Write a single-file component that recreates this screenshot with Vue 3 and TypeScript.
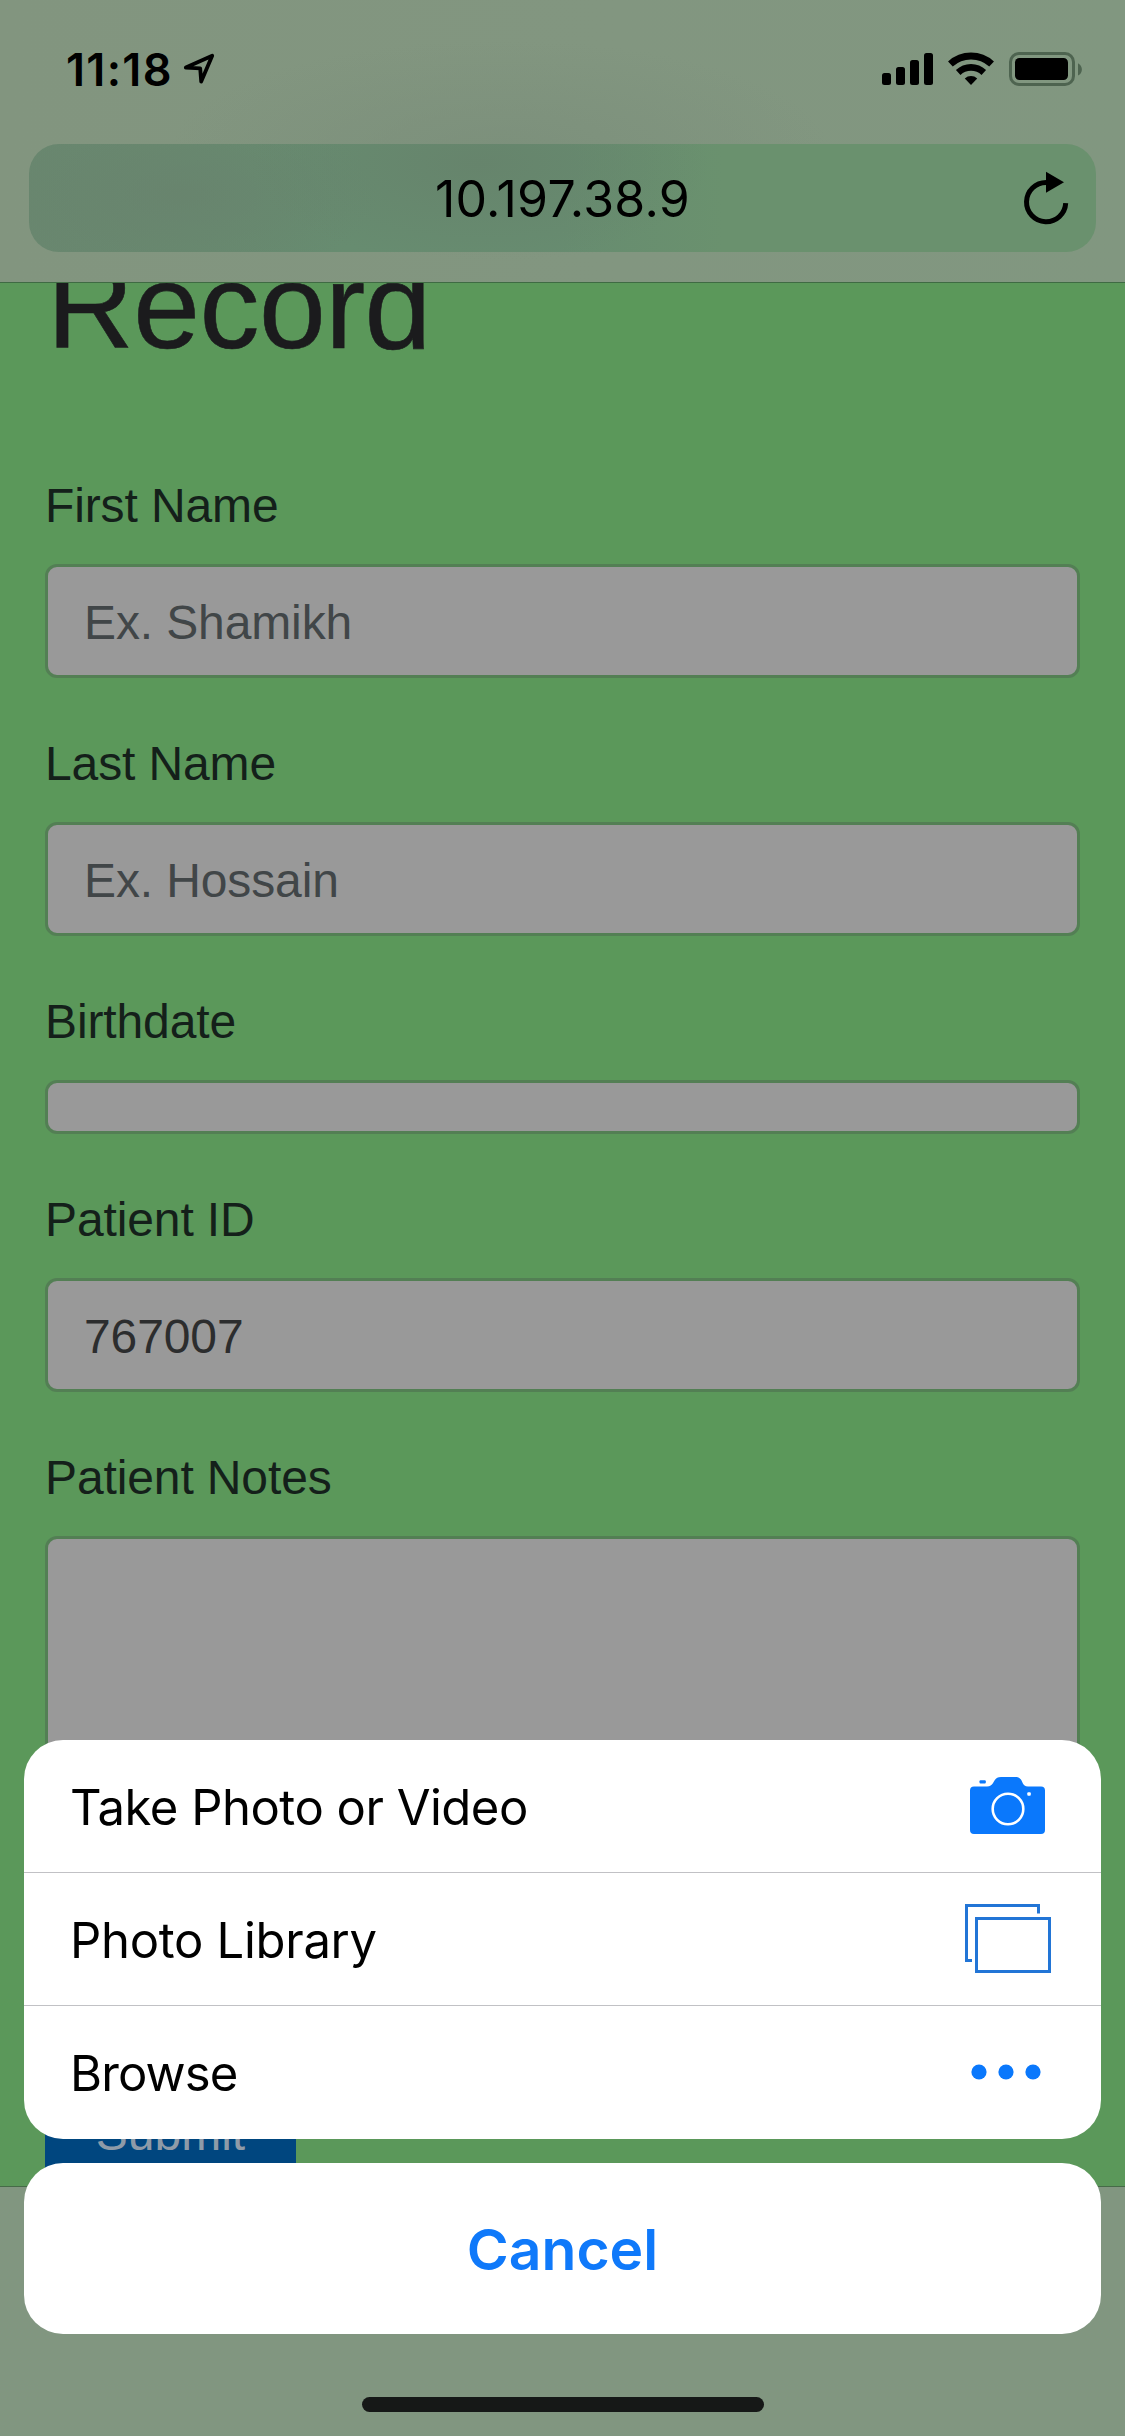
<script setup lang="ts">
interface Field {
  label: string
  value?: string
  placeholder?: string
  kind?: 'short' | 'area'
}

const fields: Field[] = [
  { label: 'First Name', placeholder: 'Ex. Shamikh' },
  { label: 'Last Name', placeholder: 'Ex. Hossain' },
  { label: 'Birthdate', kind: 'short' },
  { label: 'Patient ID', value: '767007' },
  { label: 'Patient Notes', kind: 'area' },
]
</script>

<template>
  <div class="screen">
    <header class="topbar">
      <div class="status">
        <span class="time">11:18</span>
        <svg class="loc" width="32" height="32" viewBox="0 0 32 32">
          <path d="M2.8 14.6 29.2 2.8 18.2 28.6 17.2 15.4Z" fill="none" stroke="#000" stroke-width="3.8" stroke-linejoin="round" />
        </svg>
        <svg class="signals" width="202" height="36" viewBox="0 0 202 36">
          <rect x="0" y="22" width="9" height="12" rx="2.5" />
          <rect x="14" y="16" width="9" height="18" rx="2.5" />
          <rect x="28" y="9" width="9" height="25" rx="2.5" />
          <rect x="42" y="2" width="9" height="32" rx="2.5" />
          <path d="M68.400 13a30.500 30.500 0 0 1 41.200 0" fill="none" stroke="#000" stroke-width="7" />
          <path d="M76.200 21.500a18.600 18.600 0 0 1 25.600 0" fill="none" stroke="#000" stroke-width="6.600" />
          <path d="M89 34 82.800 27.400a9.400 9.400 0 0 1 12.400 0Z" />
          <rect x="128.5" y="2.5" width="63" height="31" rx="8.5" fill="none" stroke="#4e6450" stroke-width="3" />
          <rect x="133" y="7" width="53" height="22" rx="4.5" />
          <path d="M196 12.2c5.2 2.6 5.2 10 0 12.4Z" fill="#4e6450" />
        </svg>
      </div>
      <div class="address">
        <span class="url">10.197.38.9</span>
        <svg class="reload" width="48" height="56" viewBox="0 0 48 56">
          <path d="M24.3 12.5a19.6 19.6 0 1 0 19.4 20.6" fill="none" stroke="#000" stroke-width="5" />
          <path d="M24 1.7 42 12.3 24 22.7Z" />
        </svg>
      </div>
    </header>

    <main class="page">
      <h1>Record</h1>
      <div v-for="f in fields" :key="f.label" class="group">
        <label>{{ f.label }}</label>
        <div class="control" :class="f.kind">
          <span v-if="f.value">{{ f.value }}</span>
          <span v-else-if="f.placeholder" class="placeholder">{{ f.placeholder }}</span>
        </div>
      </div>
      <button class="submit">Submit</button>
    </main>

    <footer class="toolbar"></footer>

    <div class="overlay">
      <div class="sheet">
        <div class="row">
          <span class="take">Take Photo or Video</span>
          <svg width="75" height="58" viewBox="0 0 75 58" fill="#0a78fc">
            <path d="M4 9.500H17C25 9.500 22.500 0 31 0H45.500C54 0 50.500 9.500 58 9.500H71a4 4 0 0 1 4 4V53a4 4 0 0 1-4 4H4a4 4 0 0 1-4-4V13.500a4 4 0 0 1 4-4Z" />
            <rect x="9.500" y="3.300" width="6.300" height="3.200" rx="1" />
            <circle cx="38" cy="32" r="15.300" fill="none" stroke="#fff" stroke-width="2.600" />
            <rect x="57.300" y="15.300" width="3.500" height="3.500" rx="1" fill="#fff" />
          </svg>
        </div>
        <div class="row">
          <span class="library">Photo Library</span>
          <svg class="photos" width="86" height="69" viewBox="0 0 86 69" fill="none" stroke="#2275d6" stroke-width="3">
            <path d="M7 56.500H1.500V1.500H73.500V9.500" />
            <rect x="11.500" y="14.500" width="73" height="53" />
          </svg>
        </div>
        <div class="row">
          <span class="browse">Browse</span>
          <svg class="dots" width="70" height="16" viewBox="0 0 70 16" fill="#0a78fc">
            <circle cx="8" cy="8" r="7.600" />
            <circle cx="35" cy="8" r="7.600" />
            <circle cx="62" cy="8" r="7.600" />
          </svg>
        </div>
      </div>
      <div class="cancel"><span>Cancel</span></div>
      <div class="home"></div>
    </div>
  </div>
</template>

<style>
body {
  margin: 0;
}
</style>

<style scoped>
.screen {
  position: relative;
  box-sizing: border-box;
  width: 1125px;
  height: 2436px;
  overflow: hidden;
  display: flex;
  flex-direction: column;
  background: #5b985a;
  font-family: "Liberation Sans", Arial, sans-serif;
}
.topbar {
  flex: none;
  box-sizing: border-box;
  height: 283px;
  border-bottom: 1px solid #3f6b43;
  background:
    radial-gradient(ellipse 330px 110px at 500px 150px, rgba(122, 142, 122, 0.75), rgba(122, 142, 122, 0) 100%),
    linear-gradient(90deg, #82957f, #829680 55%, #819780);
  font-family: Inter, "Noto Sans", sans-serif;
  color: #000;
}
.status {
  display: flex;
  height: 144px;
  align-items: flex-start;
}
.time {
  width: 117px;
  margin: 43px 0 0 66px;
  font-size: 45px;
  line-height: 54px;
  font-weight: 600;
  letter-spacing: 1.3px;
  white-space: nowrap;
}
.loc {
  margin-top: 53px;
}
.signals {
  margin: 51px 0 0 667px;
}
.address {
  box-sizing: border-box;
  width: 1067px;
  height: 108px;
  margin-left: 29px;
  padding-right: 26px;
  border-radius: 30px;
  display: flex;
  align-items: center;
  background:
    radial-gradient(ellipse 200px 90px at 150px 50px, rgba(104, 130, 109, 0.7), rgba(104, 130, 109, 0)),
    radial-gradient(ellipse 230px 100px at 450px 20px, rgba(102, 130, 107, 0.8), rgba(102, 130, 107, 0)),
    linear-gradient(90deg, #69876f, #678c70 30%, #678c70 50%, #6a916e 65%, #6a916e);
}
.url {
  flex: 1;
  padding: 1px 0 0 74px;
  text-align: center;
  font-size: 50px;
  line-height: 60px;
  letter-spacing: 0.3px;
}
.page {
  flex: none;
  height: 1903px;
  box-sizing: border-box;
  padding: 0 45px;
  overflow: hidden;
}
h1 {
  margin: -49px 0 90px 2px;
  font-size: 120px;
  line-height: 144px;
  font-weight: 400;
  letter-spacing: -0.5px;
  color: #1b1b1d;
  -webkit-text-stroke: 0.6px #1b1b1d;
}
.group {
  margin-bottom: 48px;
  font-size: 48px;
  line-height: 72px;
  letter-spacing: -0.12px;
  color: #14201a;
}
label {
  display: block;
  height: 70px;
  padding-top: 2px;
  margin-bottom: 24px;
}
.control {
  box-sizing: border-box;
  height: 114px;
  padding: 20px 36px 0;
  border: 3px solid #537f54;
  border-radius: 12px;
  background: #999;
  color: #2c2d2e;
}
.control.short {
  height: 54px;
}
.control.area {
  height: 264px;
}
.placeholder {
  color: #414648;
}
.submit {
  display: block;
  box-sizing: border-box;
  width: 251px;
  height: 114px;
  margin-top: 277px;
  padding: 0;
  border: 0;
  border-radius: 12px;
  background: #00467f;
  color: #8f9ba8;
  font: 48px/72px "Liberation Sans", Arial, sans-serif;
}
.toolbar {
  flex: 1;
  border-top: 1px solid #456b47;
  background: #819680;
}
.overlay {
  position: absolute;
  inset: 1740px 24px 0;
  font-family: Inter, "Noto Sans", sans-serif;
}
.sheet,
.cancel {
  background: #fff;
  border-radius: 39px;
  overflow: hidden;
}
.sheet {
  height: 399px;
}
.row {
  box-sizing: border-box;
  height: 133px;
  padding: 0 56px 0 46px;
  display: flex;
  align-items: center;
  justify-content: space-between;
  border-bottom: 1px solid #c1c1c5;
  font-size: 49px;
  line-height: 60px;
  color: #000;
}
.row:last-child {
  border-bottom: 0;
}
.row svg {
  flex: none;
}
.row span {
  padding-top: 3px;
  white-space: nowrap;
}
.take {
  letter-spacing: -0.5px;
}
.library {
  letter-spacing: -0.3px;
}
.browse {
  letter-spacing: -0.9px;
}
.photos {
  margin: 0 -6px 2px 0;
}
.dots {
  margin: 0 4px 2px 0;
}
.cancel {
  height: 171px;
  margin-top: 24px;
  display: flex;
  align-items: center;
  justify-content: center;
  font-size: 57px;
  font-weight: 600;
  color: #0f79fa;
}
.cancel span {
  padding-top: 2px;
}
.home {
  width: 402px;
  height: 15px;
  margin: 63px 0 0 338px;
  border-radius: 8px;
  background: #161817;
}
</style>
